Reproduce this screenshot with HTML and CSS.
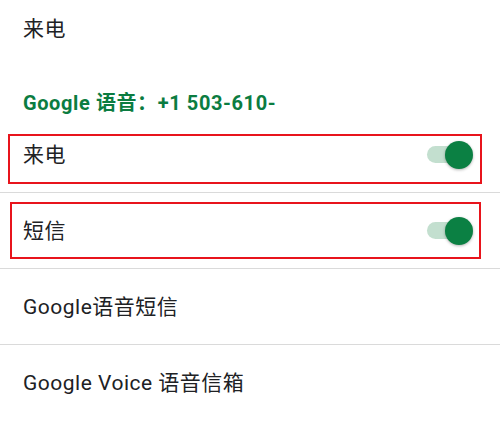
FILE: index.html
```html
<!DOCTYPE html>
<html lang="zh-CN">
<head>
<meta charset="utf-8">
<title>Google Voice 设置</title>
<link rel="stylesheet" href="styles.css">
</head>
<body>
<div class="list">
  <div class="item item-top"><span class="label">来电</span></div>
  <div class="section-title">Google 语音：+1 503-610-</div>
  <div class="item item-switch">
    <span class="label">来电</span>
    <span class="switch"><span class="track"></span><span class="thumb"></span></span>
    <span class="mark mark-a"></span>
  </div>
  <div class="divider"></div>
  <div class="item item-switch">
    <span class="label">短信</span>
    <span class="switch"><span class="track"></span><span class="thumb"></span></span>
    <span class="mark mark-b"></span>
  </div>
  <div class="divider"></div>
  <div class="item"><span class="label">Google语音短信</span></div>
  <div class="divider"></div>
  <div class="item"><span class="label">Google Voice 语音信箱</span></div>
</div>
</body>
</html>
```
FILE: styles.css
```css
html, body {
  margin: 0;
  padding: 0;
  background: #ffffff;
}
body {
  font-family: Roboto, "Noto Sans CJK SC", sans-serif;
  color: #202124;
}
.list {
  width: 500px;
  display: flex;
  flex-direction: column;
}
.item {
  position: relative;
  height: 75px;
  padding: 0 23px;
  display: flex;
  align-items: center;
  justify-content: space-between;
  box-sizing: border-box;
}
.item-top {
  height: 58px;
  align-items: flex-start;
  padding-top: 15px;
}
.label {
  font-size: 21px;
  line-height: 28px;
  letter-spacing: 0.5px;
}
.section-title {
  height: 59px;
  box-sizing: border-box;
  padding: 32px 23px 0;
  font-size: 20px;
  line-height: 26px;
  font-weight: 700;
  letter-spacing: 0.6px;
  color: #0b7c41;
}
.divider {
  height: 1px;
  background: #dadada;
}
.switch {
  position: relative;
  width: 46px;
  height: 28px;
  margin-right: 4px;
  display: flex;
  align-items: center;
}
.track {
  width: 42px;
  height: 17px;
  border-radius: 9px;
  background: #c3dfcf;
}
.thumb {
  position: absolute;
  right: 0;
  top: 0;
  width: 28px;
  height: 28px;
  border-radius: 50%;
  background: #0b8043;
  box-shadow: 0 1px 3px rgba(0, 0, 0, 0.3);
}
.mark {
  position: absolute;
  border: 2px solid #e8141c;
  box-sizing: border-box;
}
.mark-a {
  left: 8px;
  top: 17px;
  width: 474px;
  height: 50px;
}
.mark-b {
  left: 10px;
  top: 9px;
  width: 471px;
  height: 57px;
}
```
